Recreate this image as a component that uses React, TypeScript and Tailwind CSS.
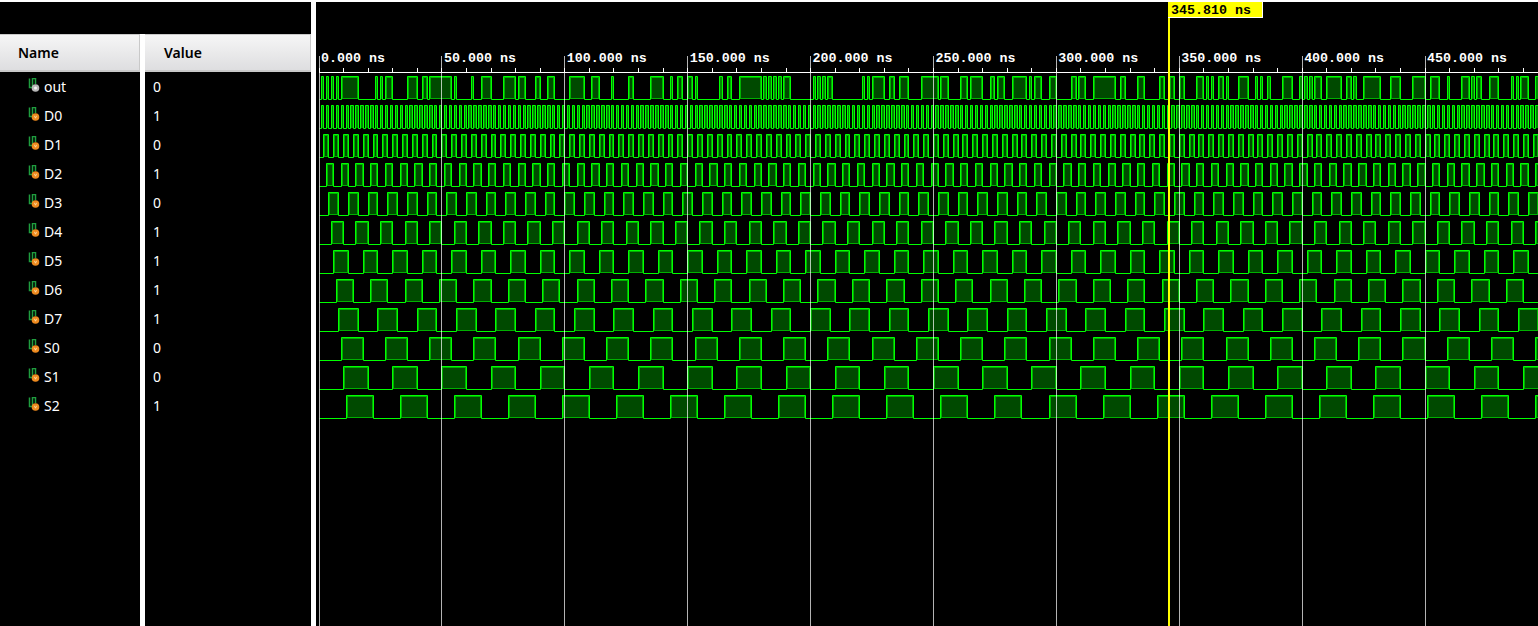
import React from 'react';

const X0 = 319;
const PX_PER_NS = 2.458;
const END_NS = 500;

const xAt = (t: number) => Math.floor(X0 + t * PX_PER_NS);

// every input toggles at a fixed half period (ns), D0 fastest, S2 slowest
const halfPeriods: Record<string, number> = {
  D0: 1, D1: 2, D2: 3, D3: 4, D4: 5, D5: 6, D6: 7, D7: 8, S0: 9, S1: 10, S2: 11,
};

const level = (name: string, t: number) => Math.floor(t / halfPeriods[name]) % 2;

// 8:1 mux, S0 is the top select bit
const outLevel = (t: number) => {
  const sel = 4 * level('S0', t) + 2 * level('S1', t) + level('S2', t);
  return level('D' + sel, t);
};

const signals = [
  { name: 'out', value: '0' },
  { name: 'D0', value: '1' },
  { name: 'D1', value: '0' },
  { name: 'D2', value: '1' },
  { name: 'D3', value: '0' },
  { name: 'D4', value: '1' },
  { name: 'D5', value: '1' },
  { name: 'D6', value: '1' },
  { name: 'D7', value: '1' },
  { name: 'S0', value: '0' },
  { name: 'S1', value: '0' },
  { name: 'S2', value: '1' },
];

const timeLabels = ['0.000', '50.000', '100.000', '150.000', '200.000', '250.000', '300.000', '350.000', '400.000', '450.000'];

const highRuns = (name: string) => {
  const fn = (t: number) => (name === 'out' ? outLevel(t) : level(name, t));
  const runs: [number, number][] = [];
  let start = -1;
  for (let t = 0; t <= END_NS; t++) {
    const v = fn(t);
    if (v && start < 0) start = t;
    if (!v && start >= 0) {
      runs.push([start, t]);
      start = -1;
    }
  }
  if (start >= 0) runs.push([start, END_NS]);
  return runs;
};

const Wave = ({ name, low }: { name: string; low: number }) => {
  const high = low - 23;
  const runs = highRuns(name).map(([a, b]) => [xAt(a), xAt(b)]);
  let line = `M${X0 + 0.5} ${low + 0.5}`;
  runs.forEach(([a, b]) => {
    line += `L${a + 0.5} ${low + 0.5}L${a + 0.5} ${high + 0.5}L${b + 0.5} ${high + 0.5}L${b + 0.5} ${low + 0.5}`;
  });
  line += `L1538 ${low + 0.5}`;
  return (
    <g>
      {runs.map(([a, b]) => (
        <g key={a}>
          <rect x={a} y={high} width={b - a} height={23} fill={b - a < 4 ? '#008a00' : '#004a00'} />
          {b - a >= 4 && (
            <rect x={a + 1.5} y={high + 1.5} width={b - a - 2} height={21} fill="none" stroke="#00b000" strokeWidth="1" />
          )}
        </g>
      ))}
      <path d={line} fill="none" stroke="#00ff00" strokeWidth="1" />
    </g>
  );
};

const SignalIcon = ({ isOut }: { isOut: boolean }) => (
  <svg width="12" height="17" viewBox="0 0 12 17" className="shrink-0">
    <path d="M1.5 0.5V9.5H4.5V0.5H7.5V6" fill="none" stroke="#1f9d3f" strokeWidth="1.5" />
    {isOut ? (
      <>
        <circle cx="7.5" cy="10" r="3.8" fill="#b8b8b8" />
        <circle cx="7.5" cy="10" r="1.5" fill="#f2f2f2" />
      </>
    ) : (
      <>
        <circle cx="7.5" cy="10" r="3.8" fill="#ee8a1f" />
        <path d="M6.4 8.8L7.5 11.2L8.6 8.8" fill="none" stroke="#ffe9b8" strokeWidth="0.8" />
      </>
    )}
  </svg>
);

const ColumnHeader = ({ label, pad }: { label: string; pad: string }) => (
  <div className={`h-[38px] flex items-center ${pad} bg-gradient-to-b from-[#f6f6f6] to-[#dedee0] border-t border-b-2 border-r border-[#c9c9c9] text-[14px] font-semibold text-black`}>
    {label}
  </div>
);

const App: React.FC = () => {
  const ticks: number[] = [];
  for (let t = 0; t <= END_NS; t += 10) ticks.push(t);

  return (
    <div
      className="w-[1538px] h-[626px] overflow-hidden bg-white pt-[2px] flex"
      style={{ fontFamily: '"Noto Sans", "Open Sans", sans-serif' }}
    >
      {/* names and values */}
      <div className="w-[311px] h-full bg-black flex flex-col shrink-0">
        <div className="h-[32px] shrink-0" />
        <div className="flex flex-1">
          <div className="w-[140px] flex flex-col">
            <ColumnHeader label="Name" pad="pl-[18px]" />
            <div>
              {signals.map((s) => (
                <div key={s.name} className="h-[29px] flex items-center pl-[28px] gap-[4px] text-[14px] text-white">
                  <SignalIcon isOut={s.name === 'out'} />
                  <span>{s.name}</span>
                </div>
              ))}
            </div>
          </div>
          <div className="w-[5px] bg-white" />
          <div className="flex-1 flex flex-col">
            <ColumnHeader label="Value" pad="pl-[19px]" />
            <div>
              {signals.map((s) => (
                <div key={s.name} className="h-[29px] flex items-center pl-[8px] text-[14px] text-white">
                  {s.value}
                </div>
              ))}
            </div>
          </div>
        </div>
      </div>

      {/* wave pane */}
      <div className="ml-[5px] flex-1 h-full bg-black relative overflow-hidden">
        <svg className="absolute inset-0" width="1222" height="624" viewBox="316 2 1222 624">
          {signals.map((s, i) => (
            <Wave key={s.name} name={s.name} low={99 + i * 29} />
          ))}
          {timeLabels.map((_, i) => {
            const x = xAt(i * 50) + 0.5;
            return <path key={i} d={`M${x} 56V626`} stroke="#ffffff" strokeOpacity="0.7" strokeWidth="1" />;
          })}
          <path d="M319 72.5H1538" stroke="#ffffff" strokeWidth="1" />
          {ticks.map((t) => (
            <path key={t} d={`M${xAt(t) + 0.5} 68V72`} stroke="#ffffff" strokeWidth="1" />
          ))}
        </svg>

        <div
          className="relative flex pl-[5px] pt-[49px] text-[13.33px] leading-[16px] font-bold text-white whitespace-pre"
          style={{ fontFamily: '"Liberation Mono", monospace' }}
        >
          {timeLabels.map((label) => (
            <div key={label} className="w-[122.9px] shrink-0">
              {label} ns
            </div>
          ))}
        </div>

        {/* cursor */}
        <div className="absolute left-[852px] top-0 bottom-0 w-[2px] bg-[#ffff00]" />
        <div
          className="absolute left-[852px] top-0 w-[95px] h-[16px] bg-[#ffff00] border-r border-b border-white pl-[3px] text-[13.33px] leading-[17px] font-bold text-black"
          style={{ fontFamily: '"Liberation Mono", monospace' }}
        >
          345.810 ns
        </div>
      </div>
    </div>
  );
};

export default App;
